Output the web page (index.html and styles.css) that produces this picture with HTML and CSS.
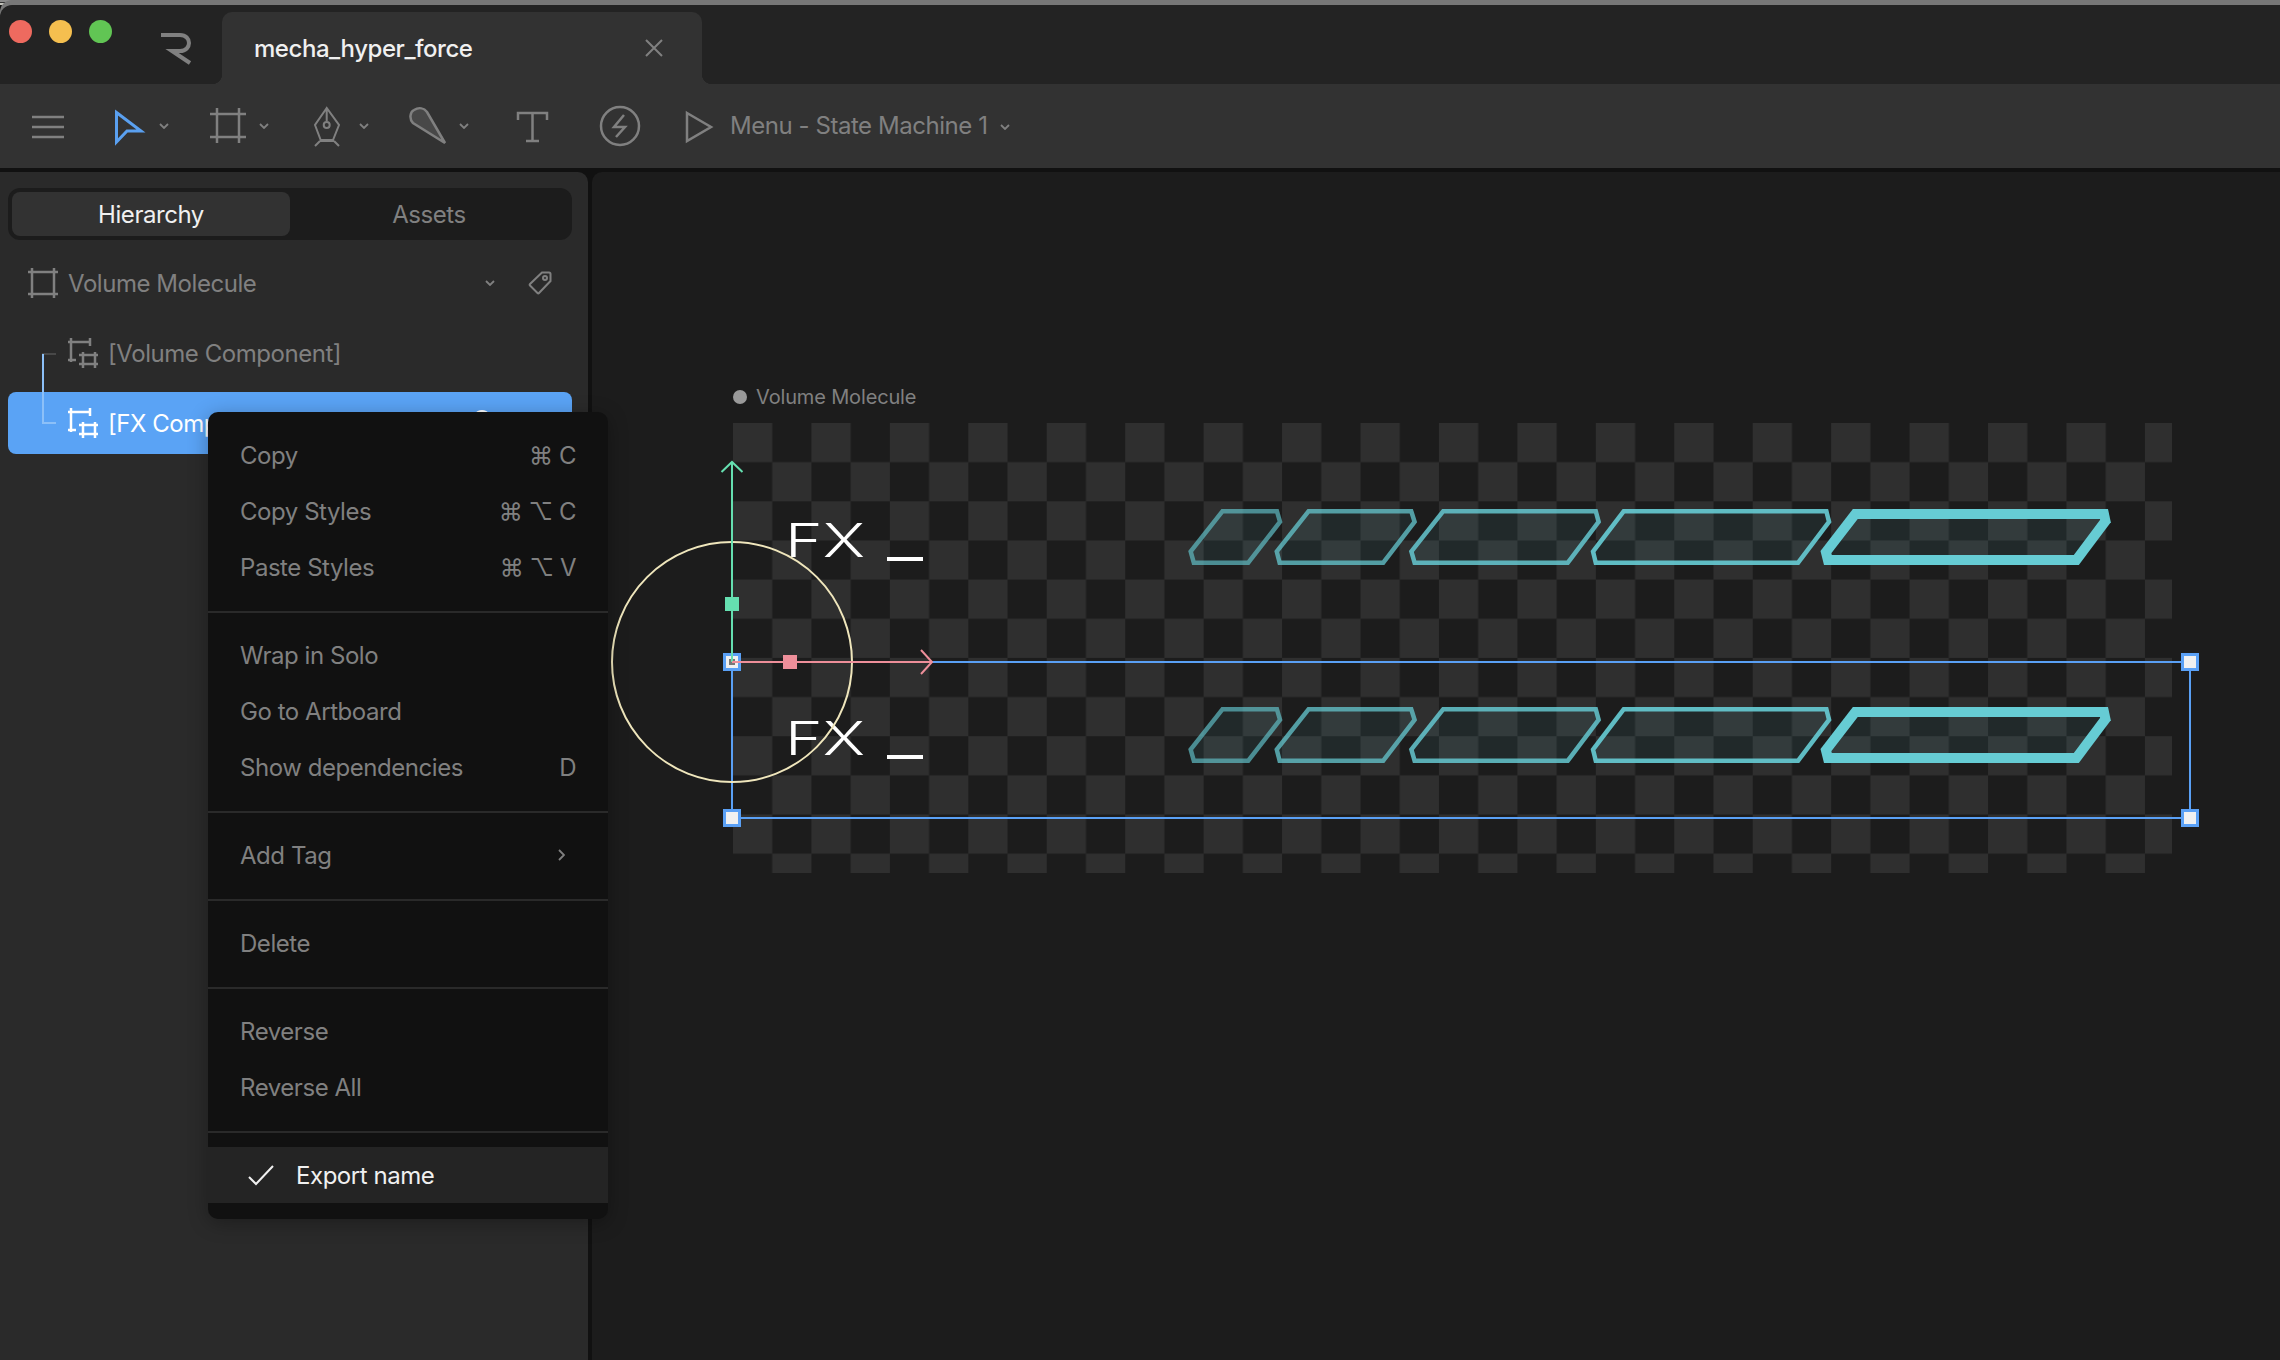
FILE: index.html
```html
<!DOCTYPE html>
<html>

<head>
  <meta charset="UTF-8">
  <link rel="stylesheet" href="styles.css">
  <title>mecha_hyper_force</title>
</head>

<body>
<div class="top-edge"></div>

<div class="titlebar">
  <div class="lights">
    <span class="light light-red"></span>
    <span class="light light-yellow"></span>
    <span class="light light-green"></span>
  </div>
  <svg class="logo" viewBox="158 30 36 36"><path d="M161 35H180C192 35 192 51 180 51H172L190 63"/></svg>
  <div class="file-tab">
    <span class="file-name">mecha_hyper_force</span>
    <svg class="file-close" viewBox="0 0 20 20"><path d="M2 2L18 18M18 2L2 18"/></svg>
  </div>
</div>

<div class="toolbar">
  <svg class="icon menu-icon" viewBox="30 104 36 44"><path d="M32 117H64M32 127H64M32 137H64"/></svg>
  <div class="tool first-tool">
    <svg class="icon" viewBox="109 104 40 44"><path class="pointer" d="M116.5 112.5L141 131H127L116.5 142Z"/></svg>
    <svg class="chevron" viewBox="0 0 10 6"><path d="M1 1L5 5L9 1"/></svg>
  </div>
  <div class="tool">
    <svg class="icon" viewBox="209 104 40 44"><path d="M210 114H246M210 137H246M217 108V143M239 108V143"/></svg>
    <svg class="chevron" viewBox="0 0 10 6"><path d="M1 1L5 5L9 1"/></svg>
  </div>
  <div class="tool">
    <svg class="icon pen-icon" viewBox="309 104 40 44">
      <path d="M326.7 108L315 125L320.7 140H333L339 125ZM326.7 108V121M320 141H334M320 141L315 146M334 141L339 146"/>
      <circle cx="326.7" cy="125" r="3"/>
    </svg>
    <svg class="chevron" viewBox="0 0 10 6"><path d="M1 1L5 5L9 1"/></svg>
  </div>
  <div class="tool">
    <svg class="icon" viewBox="409 104 40 44"><path class="brush" d="M445 143L413 123C409 119 410 112 414 110C419 107 424 108 427 112Z"/></svg>
    <svg class="chevron" viewBox="0 0 10 6"><path d="M1 1L5 5L9 1"/></svg>
  </div>
  <svg class="icon text-tool" viewBox="512 104 40 44"><path d="M518 120V113H547V120M532.5 113V141M526 141H539"/></svg>
  <svg class="icon bolt-tool" viewBox="599 104 42 44">
    <circle cx="620" cy="126" r="19"/>
    <path d="M624 115L614 127H625L616 137"/>
  </svg>
  <svg class="icon play-tool" viewBox="684 104 30 44"><path d="M687 113L711 127L687 141Z"/></svg>
  <span class="machine-name">Menu - State Machine 1</span>
  <svg class="chevron machine-chevron" viewBox="0 0 10 6"><path d="M1 1L5 5L9 1"/></svg>
</div>

<div class="main">
  <div class="panel">
    <div class="panel-tabs">
      <div class="panel-tab panel-tab-active">Hierarchy</div>
      <div class="panel-tab">Assets</div>
    </div>

    <div class="tree-row tree-root">
      <svg class="row-icon" viewBox="0 0 30 30"><path d="M0 4H30M0 26H30M4 0V30M26 0V30"/></svg>
      <span class="row-label">Volume Molecule</span>
      <svg class="chevron root-chevron" viewBox="0 0 10 6"><path d="M1 1L5 5L9 1"/></svg>
      <svg class="tag-icon" viewBox="0 0 24 24">
        <path d="M14 1.5H21C22 1.5 22.5 2 22.5 3V10L11 22C10.5 22.5 10 22.5 9.5 22L2 14.5C1.5 14 1.5 13.500 2 13Z"/>
        <circle cx="17" cy="7" r="2"/>
      </svg>
    </div>

    <div class="tree-row tree-child">
      <svg class="row-icon" viewBox="0 0 30 30"><path d="M0 4H22M3 0V24M22 0V8M0 22H8M11 17H30M11 26H30M15 14V30M27 14V30"/></svg>
      <span class="row-label">[Volume Component]</span>
    </div>

    <div class="tree-row tree-child tree-selected">
      <svg class="row-icon" viewBox="0 0 30 30"><path d="M0 4H22M3 0V24M22 0V8M0 22H8M11 17H30M11 26H30M15 14V30M27 14V30"/></svg>
      <span class="row-label">[FX Component]</span>
      <svg class="eye-icon" viewBox="0 0 22 28"><ellipse cx="11" cy="14" rx="10" ry="12"/></svg>
    </div>
  </div>

  <div class="canvas">
    <svg class="stage" viewBox="592 172 1688 1188">
      <defs>
        <pattern id="checker" patternUnits="userSpaceOnUse" x="733" y="423" width="78.44" height="78.3">
          <rect x="0" y="0" width="39.22" height="39.15" fill="#2f2f2f"/>
          <rect x="39.22" y="39.15" width="39.22" height="39.15" fill="#2f2f2f"/>
        </pattern>
        <clipPath id="clip-1"><polygon points="1221.4,509 1278.6,509 1282.500,522.300 1249.300,565 1192.100,565 1188.200,551"/></clipPath>
        <clipPath id="clip-2"><polygon points="1307.500,509 1412.900,509 1417.100,522.300 1384.300,565 1277.900,565 1274.300,551"/></clipPath>
        <clipPath id="clip-3"><polygon points="1442.100,509 1597.500,509 1601.100,522.300 1568.900,565 1412.900,565 1408.900,551"/></clipPath>
        <clipPath id="clip-4"><polygon points="1622.600,509 1828.100,509 1831.500,522.300 1799.200,565 1594,565 1590.600,551"/></clipPath>
        <clipPath id="clip-5"><polygon points="1852.900,509 2108,509 2110.800,522.300 2078.800,565 1824,565 1820.500,551"/></clipPath>
        <g id="meter">
          <polygon class="seg seg-1" clip-path="url(#clip-1)" points="1221.4,509 1278.6,509 1282.500,522.300 1249.300,565 1192.100,565 1188.200,551"/>
          <polygon class="seg seg-2" clip-path="url(#clip-2)" points="1307.500,509 1412.900,509 1417.100,522.300 1384.300,565 1277.900,565 1274.300,551"/>
          <polygon class="seg seg-3" clip-path="url(#clip-3)" points="1442.100,509 1597.500,509 1601.100,522.300 1568.900,565 1412.900,565 1408.900,551"/>
          <polygon class="seg seg-4" clip-path="url(#clip-4)" points="1622.600,509 1828.100,509 1831.500,522.300 1799.200,565 1594,565 1590.600,551"/>
          <polygon class="seg seg-5" clip-path="url(#clip-5)" points="1852.900,509 2108,509 2110.800,522.300 2078.800,565 1824,565 1820.500,551"/>
        </g>
      </defs>

      <circle class="board-dot" cx="740" cy="397" r="7"/>
      <text class="board-label" x="756" y="404">Volume Molecule</text>
      <rect x="733" y="423" width="1439" height="450" fill="#1c1c1c"/>
      <rect x="733" y="423" width="1439" height="450" fill="url(#checker)"/>

      <text class="fx-label" x="785" y="557" textLength="80" lengthAdjust="spacingAndGlyphs">FX</text>
      <rect class="fx-cursor" x="887" y="557" width="36" height="4"/>
      <use href="#meter"/>
      <text class="fx-label" x="785" y="755" textLength="80" lengthAdjust="spacingAndGlyphs">FX</text>
      <rect class="fx-cursor" x="887" y="755" width="36" height="4"/>
      <use href="#meter" y="198"/>

      <path class="select-line" d="M932 662H2190V818H732V662"/>
      <circle class="pivot-ring" cx="732" cy="662" r="120"/>

      <rect class="handle" x="724.500" y="654.500" width="15" height="15"/>
      <rect class="handle" x="2182.500" y="654.500" width="15" height="15"/>
      <rect class="handle" x="724.500" y="810.500" width="15" height="15"/>
      <rect class="handle" x="2182.500" y="810.500" width="15" height="15"/>
      <rect class="origin" x="729" y="659" width="6" height="6"/>

      <path class="axis-y" d="M732 662V463M721.500 472L732 462L742.500 472"/>
      <rect class="axis-y-knob" x="725" y="597" width="14" height="14"/>
      <path class="axis-x" d="M732 662H932M921 650L932 662L921 674"/>
      <rect class="axis-x-knob" x="783" y="655" width="14" height="14"/>
    </svg>
  </div>
</div>

<div class="context-menu">
  <div class="menu-group">
    <div class="menu-item"><span>Copy</span><span class="menu-key">⌘ C</span></div>
    <div class="menu-item"><span>Copy Styles</span><span class="menu-key">⌘ ⌥ C</span></div>
    <div class="menu-item"><span>Paste Styles</span><span class="menu-key">⌘ ⌥ V</span></div>
  </div>
  <div class="menu-group">
    <div class="menu-item"><span>Wrap in Solo</span></div>
    <div class="menu-item"><span>Go to Artboard</span></div>
    <div class="menu-item"><span>Show dependencies</span><span class="menu-key">D</span></div>
  </div>
  <div class="menu-group">
    <div class="menu-item">
      <span>Add Tag</span>
      <svg class="menu-arrow" viewBox="0 0 7 12"><path d="M1 1L6 6L1 11"/></svg>
    </div>
  </div>
  <div class="menu-group">
    <div class="menu-item"><span>Delete</span></div>
  </div>
  <div class="menu-group">
    <div class="menu-item"><span>Reverse</span></div>
    <div class="menu-item"><span>Reverse All</span></div>
  </div>
  <div class="menu-group">
    <div class="menu-item menu-item-checked">
      <svg class="menu-check" viewBox="0 0 28 22"><path d="M2 13L9 20L26 2"/></svg>
      <span>Export name</span>
    </div>
  </div>
</div>

</body>
</html>
```

FILE: styles.css
```css
body {
    font-family: Inter, "DejaVu Sans", sans-serif;
    font-size: 24px;
    letter-spacing: -0.45px;
    background-color: #111;
    color: #808080;
    margin: 0;
    height: 1360px;
    overflow: hidden;
    position: relative;
}

svg {
    display: block;
    flex: none;
}

.top-edge {
    height: 5px;
    background: linear-gradient(#8a8a8a 0 2px, #333 2px 3px, #c4c4bc 3px);
}

/* title bar */

.titlebar {
    height: 79px;
    background-color: #232323;
    display: flex;
    border-top-left-radius: 12px;
    box-shadow: 0 -5px 0 #777;
    position: relative;
}

.lights {
    display: flex;
    gap: 17px;
    padding: 15px 0 0 9px;
}

.light {
    width: 23px;
    height: 23px;
    border-radius: 50%;
}

.light-red {
    background-color: #ee6a5f;
}

.light-yellow {
    background-color: #f5bf4f;
}

.light-green {
    background-color: #61c554;
}

.logo {
    width: 36px;
    height: 36px;
    margin: 25px 0 0 46px;
    fill: none;
    stroke: #808080;
    stroke-width: 4;
}

.file-tab {
    width: 480px;
    height: 72px;
    margin: 7px 0 0 28px;
    background-color: #323232;
    border-radius: 10px 10px 0 0;
    display: flex;
    align-items: center;
    justify-content: space-between;
    padding: 0 38px 0 32px;
    box-sizing: border-box;
    position: relative;
}

.file-tab::before,
.file-tab::after {
    content: "";
    position: absolute;
    bottom: 0;
    width: 10px;
    height: 10px;
}

.file-tab::before {
    left: -10px;
    background: radial-gradient(circle at 0 0, transparent 10px, #323232 10.5px);
}

.file-tab::after {
    right: -10px;
    background: radial-gradient(circle at 100% 0, transparent 10px, #323232 10.5px);
}

.file-name {
    color: #f0f0f0;
    font-weight: 500;
    font-size: 24px;
}

.file-close {
    width: 20px;
    height: 20px;
    fill: none;
    stroke: #808080;
    stroke-width: 2;
}

/* toolbar */

.toolbar {
    height: 84px;
    background-color: #323232;
    display: flex;
    align-items: center;
}

.icon {
    height: 44px;
    fill: none;
    stroke: #808080;
    stroke-width: 2.500;
}

.menu-icon {
    width: 36px;
    margin-left: 30px;
}

.tool {
    width: 100px;
    display: flex;
    align-items: center;
    gap: 10px;
}

.first-tool {
    margin-left: 43px;
}

.tool .icon {
    width: 40px;
}

.pen-icon {
    stroke-width: 2;
}

.pointer {
    stroke: #5aa0f0;
    stroke-width: 3;
}

.brush {
    fill: #484848;
}

.chevron {
    width: 10px;
    height: 6px;
    fill: none;
    stroke: #808080;
    stroke-width: 1.800;
}

.text-tool {
    width: 40px;
    margin-left: 3px;
}

.bolt-tool {
    width: 42px;
    margin-left: 47px;
}

.play-tool {
    width: 30px;
    margin-left: 43px;
}

.machine-name {
    margin-left: 16px;
    margin-top: -2px;
    white-space: nowrap;
}

.machine-chevron {
    margin-left: 13px;
    margin-top: 2px;
}

/* left panel and canvas */

.main {
    height: 1192px;
    background-color: #111;
    padding-top: 4px;
    box-sizing: border-box;
    display: flex;
    gap: 4px;
}

.panel {
    width: 588px;
    background-color: #2a2a2a;
    border-top-right-radius: 10px;
    padding: 16px 16px 0 8px;
    box-sizing: border-box;
}

.panel-tabs {
    display: flex;
    height: 52px;
    padding: 4px;
    box-sizing: border-box;
    background-color: #1c1c1c;
    border-radius: 12px;
    margin-bottom: 8px;
}

.panel-tab {
    flex: 1;
    display: flex;
    align-items: center;
    justify-content: center;
    border-radius: 8px;
}

.panel-tab-active {
    background-color: #323232;
    color: #f0f0f0;
}

.tree-row {
    display: flex;
    align-items: center;
    height: 70px;
    position: relative;
}

.row-label {
    white-space: nowrap;
}

.tree-root {
    padding-left: 20px;
    gap: 10px;
}

.tree-child {
    padding-left: 60px;
    gap: 10px;
}

.tree-child::before {
    content: "";
    position: absolute;
    left: 34px;
    width: 14px;
    height: 70px;
    bottom: 35px;
    border: solid #484848;
    border-width: 0 0 2px 2px;
    box-sizing: border-box;
}

.tree-child:nth-of-type(3)::before {
    height: 2px;
    border-width: 2px 0 0 2px;
    bottom: 33px;
}

.row-icon {
    width: 30px;
    height: 30px;
    fill: none;
    stroke: #808080;
    stroke-width: 2.500;
}

.root-chevron {
    margin-left: 219px;
}

.tag-icon {
    width: 24px;
    height: 24px;
    margin-left: 23px;
    fill: none;
    stroke: #808080;
    stroke-width: 2;
}

.tree-selected {
    height: 62px;
    margin-top: 4px;
    background-color: #5aa3f5;
    border-radius: 8px;
    color: #fff;
}

.tree-selected .row-icon {
    stroke: #fff;
}

.tree-selected::before {
    border-color: #8cc0f8;
    bottom: 30px;
}

.eye-icon {
    width: 22px;
    height: 28px;
    margin-left: auto;
    margin-right: 79px;
    fill: none;
    stroke: #fff;
    stroke-width: 2;
}

.canvas {
    flex: 1;
    background-color: #1c1c1c;
    border-top-left-radius: 10px;
    overflow: hidden;
}

.stage {
    width: 1688px;
    height: 1188px;
}

.board-dot {
    fill: #9a9a9a;
}

.board-label {
    font-size: 20px;
    letter-spacing: -0.15px;
    fill: #808080;
}

.fx-label {
    font-size: 47px;
    font-weight: 300;
    letter-spacing: 0;
    fill: #fff;
}

.fx-cursor {
    fill: #fff;
}

.seg {
    fill: #66ccd4;
    fill-opacity: 0.08;
    stroke: #66ccd4;
    stroke-width: 9;
}

.seg-1 {
    stroke-opacity: 0.62;
}

.seg-2 {
    stroke-opacity: 0.72;
}

.seg-3 {
    stroke-opacity: 0.82;
}

.seg-4 {
    stroke-opacity: 0.9;
}

.seg-5 {
    stroke-width: 20;
}

.select-line {
    fill: none;
    stroke: #5aa0f5;
    stroke-width: 2;
}

.pivot-ring {
    fill: none;
    stroke: #efe6bc;
    stroke-width: 2;
}

.handle {
    fill: #f0f0f0;
    stroke: #5aa0f5;
    stroke-width: 3;
}

.origin {
    fill: #777;
}

.axis-y {
    fill: none;
    stroke: #65dfb0;
    stroke-width: 2;
}

.axis-y-knob {
    fill: #65dfb0;
}

.axis-x {
    fill: none;
    stroke: #ee8f9a;
    stroke-width: 2;
}

.axis-x-knob {
    fill: #ee8f9a;
}

/* context menu, lies over panel and canvas */

.context-menu {
    position: absolute;
    left: 208px;
    top: 412px;
    width: 400px;
    background-color: #111;
    border-radius: 10px;
    box-shadow: 0 4px 20px rgba(0, 0, 0, 0.3);
}

.menu-group {
    padding: 15px 0 16px;
}

.menu-group + .menu-group {
    padding-top: 14px;
    border-top: 2px solid #2a2a2a;
}

.menu-item {
    height: 56px;
    padding: 0 32px;
    display: flex;
    align-items: center;
    justify-content: space-between;
}

.menu-key {
    white-space: nowrap;
}

.menu-arrow {
    width: 7px;
    height: 12px;
    margin-right: 11px;
    fill: none;
    stroke: #808080;
    stroke-width: 1.800;
}

.menu-item-checked {
    background-color: #242424;
    color: #f0f0f0;
    justify-content: flex-start;
    padding-left: 39px;
    gap: 21px;
}

.menu-check {
    width: 28px;
    height: 22px;
    fill: none;
    stroke: #f0f0f0;
    stroke-width: 2;
}
```
